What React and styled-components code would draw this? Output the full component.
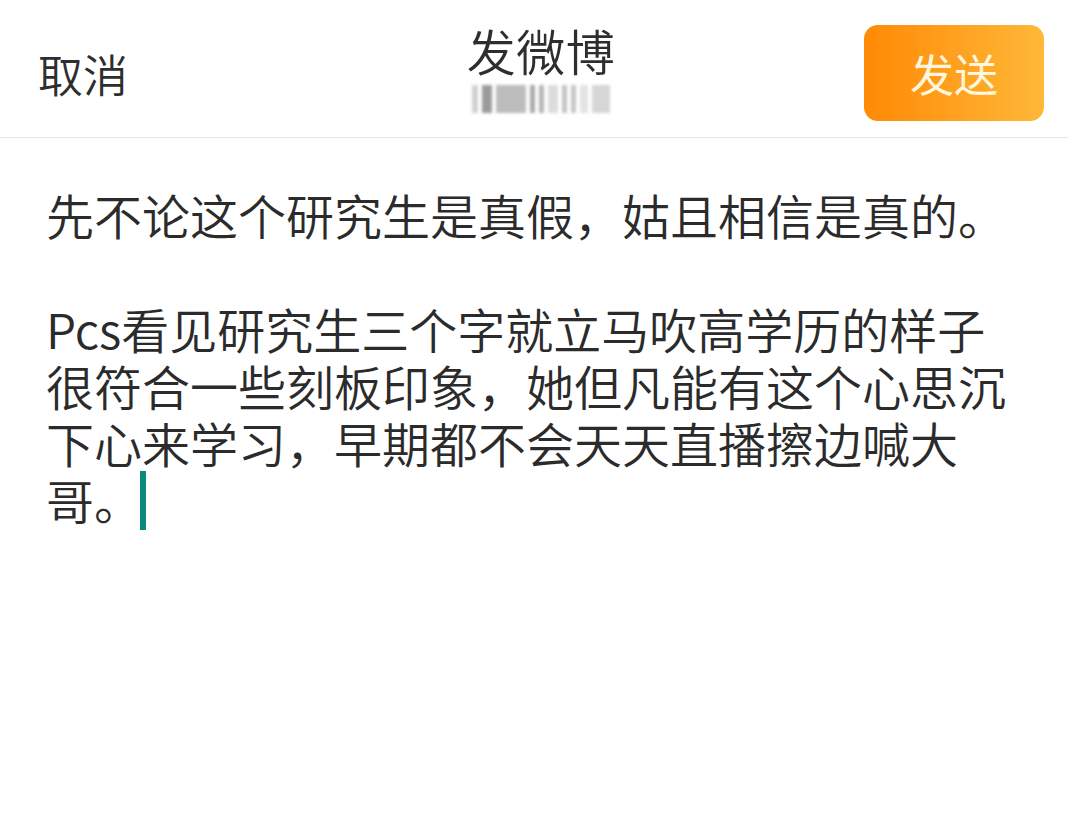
import React from "react";
import styled, { createGlobalStyle } from "styled-components";

const Global = createGlobalStyle`
  html, body { margin: 0; padding: 0; background: #ffffff; }
  body { font-family: "Noto Sans CJK SC", "Noto Sans", sans-serif; }
`;

const Page = styled.div`
  width: 1068px;
  height: 828px;
  background: #ffffff;
  display: flex;
  flex-direction: column;
  overflow: hidden;
`;

const Header = styled.header`
  height: 138px;
  border-bottom: 1px solid #e6e6e6;
  display: grid;
  grid-template-columns: 1fr auto 1fr;
  align-items: center;
  padding: 0 24px 0 38px;
  box-sizing: border-box;
`;

const Cancel = styled.div`
  font-size: 45px;
  font-weight: 350;
  color: #2e2e2e;
  justify-self: start;
  padding-top: 10px;
`;

const TitleBlock = styled.div`
  display: flex;
  flex-direction: column;
  align-items: center;
  margin-top: -4px;
`;

const Title = styled.div`
  font-size: 49px;
  font-weight: 350;
  line-height: 58px;
  color: #2e2e2e;
  letter-spacing: 0.5px;
`;

const Blurred = styled.div`
  display: flex;
  align-items: stretch;
  gap: 4px;
  height: 28px;
  margin-top: 6px;
  filter: blur(1.4px);
`;

const Bar = styled.span`
  display: block;
  width: ${(p) => p.w}px;
  background: ${(p) => p.c};
  opacity: 0.85;
`;

const SendButton = styled.button`
  justify-self: end;
  width: 180px;
  height: 96px;
  border: none;
  border-radius: 14px;
  background: linear-gradient(90deg, #ff8a05 0%, #ffa524 60%, #ffb838 100%);
  color: #fff6de;
  font-family: "Noto Sans CJK SC", sans-serif;
  font-size: 44px;
  padding: 0;
  margin-top: 8px;
`;

const Body = styled.div`
  padding: 48px 40px 0 46px;
  font-size: 48px;
  font-weight: 350;
  line-height: 57px;
  color: #2b2b2b;
  white-space: pre-wrap;
`;

const Caret = styled.span`
  display: inline-block;
  width: 6px;
  height: 59px;
  background: #0b8a7c;
  vertical-align: top;
  margin-left: -2px;
`;

const bars = [
  [6, "#c8c8c8"], [10, "#8a8a8a"], [30, "#b0b0b0"], [5, "#9a9a9a"], [5, "#a8a8a8"],
  [10, "#d6d6d6"], [5, "#b8b8b8"], [5, "#bcbcbc"], [8, "#dedede"], [18, "#cfcfcf"],
];

export default function App() {
  return (
    <Page>
      <Global />
      <Header>
        <Cancel>取消</Cancel>
        <TitleBlock>
          <Title>发微博</Title>
          <Blurred>
            {bars.map(([w, c], i) => (
              <Bar key={i} w={w} c={c} />
            ))}
          </Blurred>
        </TitleBlock>
        <SendButton>发送</SendButton>
      </Header>
      <Body>
        {"先不论这个研究生是真假，姑且相信是真的。\n\nPcs看见研究生三个字就立马吹高学历的样子\n很符合一些刻板印象，她但凡能有这个心思沉\n下心来学习，早期都不会天天直播擦边喊大\n哥。"}
        <Caret />
      </Body>
    </Page>
  );
}
